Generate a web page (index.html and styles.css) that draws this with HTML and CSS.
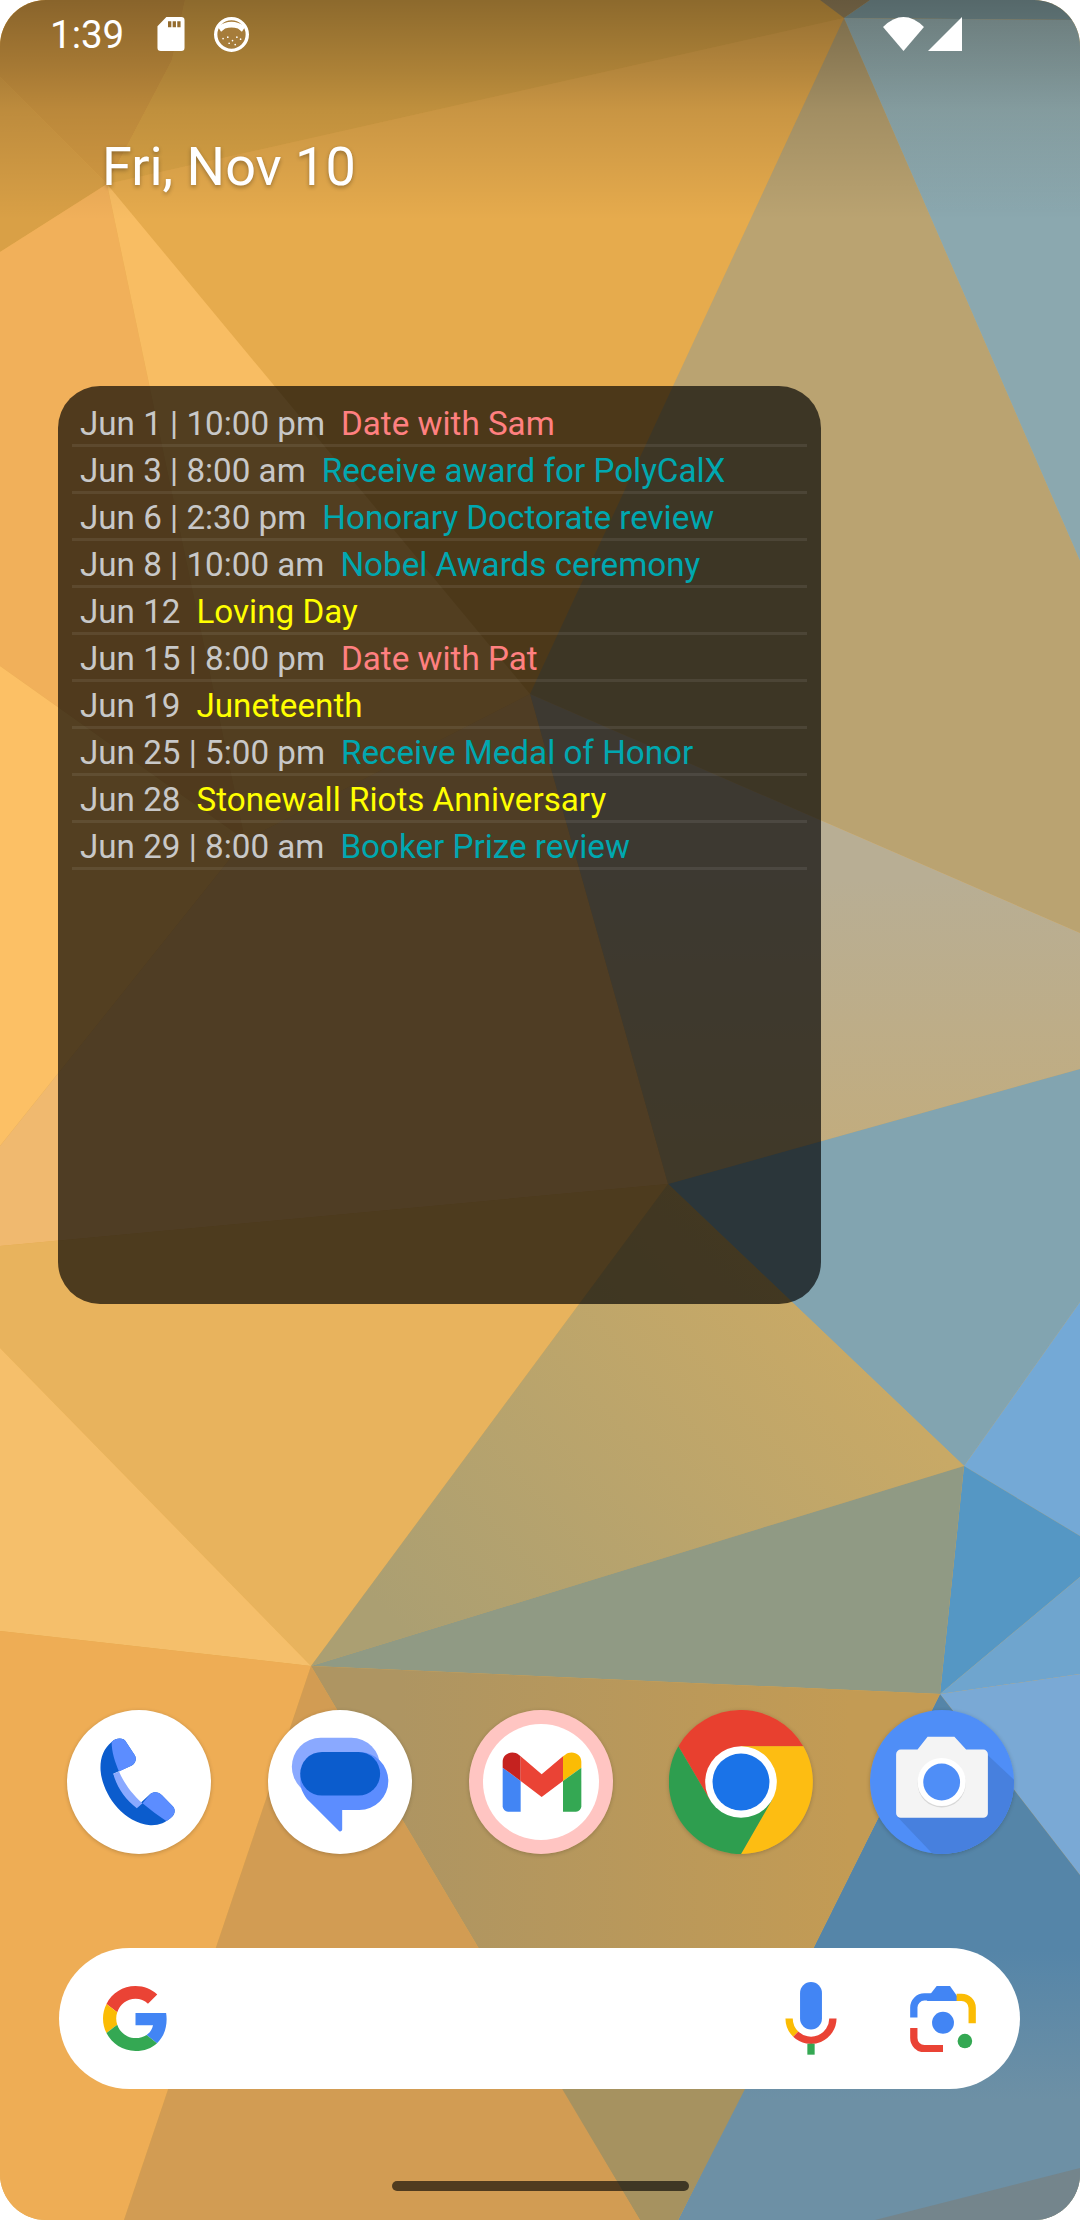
FILE: index.html
```html
<!DOCTYPE html>
<html lang="en">
<head>
    <meta charset="UTF-8">
    <meta name="viewport" content="width=device-width, initial-scale=1.0">
    <title>Home screen</title>
    <link rel="stylesheet" href="styles.css">
</head>
<body>
    <div class="screen">
        <!-- Wallpaper -->
        <svg class="wallpaper" viewBox="0 0 1080 2220">
            <defs>
                <linearGradient id="slate" gradientUnits="userSpaceOnUse" x1="0" y1="20" x2="0" y2="210">
                    <stop offset="0" stop-color="#a2bcbc"/>
                    <stop offset="1" stop-color="#8ba8af"/>
                </linearGradient>
                <linearGradient id="sand" gradientUnits="userSpaceOnUse" x1="0" y1="880" x2="0" y2="1180">
                    <stop offset="0" stop-color="#b8ae94"/>
                    <stop offset="1" stop-color="#c3ac7b"/>
                </linearGradient>
                <linearGradient id="olive" gradientUnits="userSpaceOnUse" x1="420" y1="1650" x2="800" y2="1300">
                    <stop offset="0" stop-color="#ab9f72"/>
                    <stop offset="1" stop-color="#c8a966"/>
                </linearGradient>
                <linearGradient id="umber" gradientUnits="userSpaceOnUse" x1="400" y1="0" x2="850" y2="0">
                    <stop offset="0" stop-color="#ae9562"/>
                    <stop offset="1" stop-color="#c39b54"/>
                </linearGradient>
                <linearGradient id="deep" gradientUnits="userSpaceOnUse" x1="0" y1="1950" x2="0" y2="2100">
                    <stop offset="0" stop-color="#5585a8"/>
                    <stop offset="1" stop-color="#6d90a5"/>
                </linearGradient>
            </defs>
            <rect width="1080" height="2220" fill="#e3a94c"/>
            <polygon points="0,77 107,184 172,60 185,0 0,0" fill="#d69c43"/>
            <polygon points="172,60 185,0 820,0 844,18 107,184" fill="#dca546"/>
            <polygon points="0,77 107,184 0,252" fill="#d9a046"/>
            <polygon points="820,0 870,0 844,18" fill="#a08a60"/>
            <polygon points="870,0 1080,0 1080,20 844,18" fill="#86a3a6"/>
            <polygon points="0,252 107,184 245,840 0,666" fill="#f1b05a"/>
            <polygon points="107,184 844,18 530,694" fill="#e6ab4d"/>
            <polygon points="107,184 530,694 245,840" fill="#f8bd63"/>
            <polygon points="0,666 245,840 0,1146" fill="#fcc065"/>
            <polygon points="0,1146 245,840 530,694 668,1184 0,1246" fill="#f0b96f"/>
            <polygon points="844,18 1080,561 1080,933 530,694" fill="#baa371"/>
            <polygon points="844,18 1080,20 1080,561" fill="url(#slate)"/>
            <polygon points="530,694 1080,933 1080,1069 668,1184" fill="url(#sand)"/>
            <polygon points="668,1184 1080,1069 1080,1302 964,1466" fill="#82a4b0"/>
            <polygon points="964,1466 1080,1302 1080,1536" fill="#74a9d6"/>
            <polygon points="964,1466 1080,1536 1080,1577 940,1694" fill="#5597c4"/>
            <polygon points="940,1694 1080,1577 1080,1674" fill="#6fa5ce"/>
            <polygon points="940,1694 1080,1674 1080,1875" fill="#7aa9d5"/>
            <polygon points="940,1694 1080,1875 1080,2220 678,2220" fill="url(#deep)"/>
            <polygon points="1080,2168 1080,2220 875,2220" fill="#74858c"/>
            <polygon points="0,1246 668,1184 311,1666 0,1348" fill="#e8b35d"/>
            <polygon points="668,1184 964,1466 311,1666" fill="url(#olive)"/>
            <polygon points="311,1666 964,1466 940,1694" fill="#909a84"/>
            <polygon points="0,1348 311,1666 0,1631" fill="#f5bf6b"/>
            <polygon points="0,1631 311,1666 124,2220 0,2220" fill="#eead55"/>
            <polygon points="311,1666 940,1694 678,2220 640,2220" fill="url(#umber)"/>
            <polygon points="561,2089 745,2089 678,2220 640,2220" fill="#a69260"/>
            <polygon points="311,1666 124,2220 640,2220" fill="#d29c53"/>
        </svg>
        <div class="scrim"></div>

        <!-- Status bar -->
        <div class="status-bar">
            <span class="clock">1:39</span>
            <svg class="sd-icon" viewBox="473 47 82 103">
                <path fill="#fff" fill-rule="evenodd" d="M500,47 H545 a10 10 0 0 1 10 10 V140 a10 10 0 0 1 -10 10 H483 a10 10 0 0 1 -10 -10 V75 Z M505,60 V78 H515 V60 Z M519,60 V78 H529 V60 Z M533,60 V78 H543 V60 Z"/>
            </svg>
            <svg class="cat-icon" viewBox="645 48 104 104">
                <circle cx="697" cy="100" r="47" fill="#a67c3a" stroke="#fff" stroke-width="10"/>
                <path fill="#fff" d="M656,76 Q697,48 738,76 L728,92 L716,82 Q697,76 678,82 L666,92 Z"/>
                <g fill="#fff">
                    <circle cx="672" cy="112" r="2.5"/><circle cx="686" cy="108" r="2.5"/>
                    <circle cx="700" cy="118" r="2.5"/><circle cx="713" cy="108" r="2.5"/>
                    <circle cx="724" cy="114" r="2.5"/><circle cx="690" cy="126" r="2.5"/>
                    <circle cx="708" cy="130" r="2.5"/>
                </g>
            </svg>
            <svg class="wifi-icon" viewBox="248 45 124 103">
                <path fill="#fff" d="M248,75 Q310,15 372,75 L310,148 Z"/>
            </svg>
            <svg class="signal-icon" viewBox="384 47 101 101">
                <polygon fill="#fff" points="485,47 485,148 384,148"/>
            </svg>
        </div>

        <div class="date">Fri, Nov 10</div>

        <!-- Calendar widget -->
        <div class="widget">
            <ul class="agenda">
                <li><span class="when">Jun 1 | 10:00 pm</span><span class="date-event">Date with Sam</span></li>
                <li><span class="when">Jun 3 | 8:00 am</span><span class="honor">Receive award for PolyCalX</span></li>
                <li><span class="when">Jun 6 | 2:30 pm</span><span class="honor">Honorary Doctorate review</span></li>
                <li><span class="when">Jun 8 | 10:00 am</span><span class="honor">Nobel Awards ceremony</span></li>
                <li><span class="when">Jun 12</span><span class="holiday">Loving Day</span></li>
                <li><span class="when">Jun 15 | 8:00 pm</span><span class="date-event">Date with Pat</span></li>
                <li><span class="when">Jun 19</span><span class="holiday">Juneteenth</span></li>
                <li><span class="when">Jun 25 | 5:00 pm</span><span class="honor">Receive Medal of Honor</span></li>
                <li><span class="when">Jun 28</span><span class="holiday">Stonewall Riots Anniversary</span></li>
                <li><span class="when">Jun 29 | 8:00 am</span><span class="honor">Booker Prize review</span></li>
            </ul>
        </div>

        <!-- Dock -->
        <div class="dock">
            <div class="app app-white">
                <svg viewBox="82 60 429 429">
                    <path fill="#0b5ccd" d="M215,155 C190,175 180,205 182,240 C186,300 240,395 330,403 C355,404 375,397 395,378 C405,368 405,355 397,347 L365,314 C355,303 340,303 330,310 L300,338 C270,315 240,285 220,250 L275,225 C287,218 290,205 284,195 L258,155 C250,142 230,142 215,155 Z"/>
                    <path fill="#5c8dff" d="M215,155 C225,143 250,140 258,155 L284,195 C290,205 287,218 275,225 L237,243 C225,215 215,185 215,155 Z"/>
                    <path fill="#8aa9ff" d="M220,250 L237,243 C250,275 275,310 307,338 L290,353 C255,325 230,290 220,250 Z"/>
                    <path fill="#5c8dff" d="M307,338 L330,310 C340,303 355,303 365,314 L397,347 C405,355 405,368 395,378 C390,383 385,387 378,391 C355,375 330,358 307,338 Z"/>
                </svg>
            </div>
            <div class="app app-white">
                <svg viewBox="684 60 429 429">
                    <rect x="755" y="143" width="263" height="172" rx="86" fill="#8aa9ff"/>
                    <path fill="#5c8dff" d="M866,185 H956 a86.5 86.5 0 0 1 0 173 H905 V415 a6 6 0 0 1 -11 4 L800,325 C785,305 780,290 780,271 A86 86 0 0 1 866,185 Z"/>
                    <rect x="780" y="185" width="238" height="130" rx="65" fill="#0b5ccd"/>
                </svg>
            </div>
            <div class="app app-gmail">
                <svg viewBox="55 57 432 432">
                    <circle cx="271" cy="273" r="216" fill="#ffc5c2"/>
                    <circle cx="271" cy="273" r="174" fill="#fff"/>
                    <path fill="#4285f4" d="M156,230 L210,270 V362 H172 a16 16 0 0 1 -16 -16 Z"/>
                    <path fill="#c5221f" d="M156,230 V212 C156,188 186,176 205,192 L210,196 V270 Z"/>
                    <polygon fill="#ea4335" points="210,196 273,250 337,196 337,270 273,318 210,270"/>
                    <path fill="#fbbc04" d="M392,230 V212 C392,188 362,176 343,192 L337,196 V270 Z"/>
                    <path fill="#34a853" d="M392,230 L337,270 V362 H376 a16 16 0 0 0 16 -16 Z"/>
                </svg>
            </div>
            <div class="app">
                <svg viewBox="60 60 430 430">
                    <path fill="#e8402f" d="M88,168 A215 215 0 0 1 461,168 L275,168 L182,328 Z"/>
                    <path fill="#fdbd12" d="M461,168 A215 215 0 0 1 275,490 L368,328 L275,168 Z"/>
                    <path fill="#2e9e4f" d="M275,490 A215 215 0 0 1 88,168 L182,328 L368,328 Z"/>
                    <circle cx="275" cy="275" r="107" fill="#fff"/>
                    <circle cx="275" cy="275" r="85" fill="#1a73e8"/>
                </svg>
            </div>
            <div class="app">
                <svg viewBox="663 60 430 430">
                    <clipPath id="cameraClip"><circle cx="878" cy="275" r="215"/></clipPath>
                    <circle cx="878" cy="275" r="215" fill="#4f8ef7"/>
                    <polygon clip-path="url(#cameraClip)" fill="#4780de" points="1015,195 1100,275 1100,500 860,500 741,375"/>
                    <path fill="#f4f4f4" d="M755,178 H805 L835,140 H915 L950,178 H1001 a14 14 0 0 1 14 14 V368 a14 14 0 0 1 -14 14 H755 a14 14 0 0 1 -14 -14 V192 a14 14 0 0 1 14 -14 Z"/>
                    <circle cx="877" cy="279" r="72" fill="#d8d8d8"/>
                    <circle cx="877" cy="275" r="72" fill="#fff"/>
                    <circle cx="877" cy="275" r="55" fill="#4f8ef7"/>
                </svg>
            </div>
        </div>

        <!-- Search bar -->
        <div class="search">
            <svg class="g-logo" viewBox="0 0 48 48">
                <path fill="#ea4335" d="M24 9.5c3.54 0 6.71 1.22 9.21 3.6l6.85-6.85C35.9 2.38 30.47 0 24 0 14.62 0 6.51 5.38 2.56 13.22l7.98 6.19C12.43 13.72 17.74 9.5 24 9.5z"/>
                <path fill="#4285f4" d="M46.98 24.55c0-1.57-.15-3.09-.38-4.55H24v9.02h12.94c-.58 2.96-2.26 5.48-4.78 7.18l7.73 6c4.51-4.18 7.09-10.36 7.09-17.65z"/>
                <path fill="#fbbc05" d="M10.53 28.59c-.5-1.45-.78-2.99-.78-4.59s.27-3.14.78-4.59l-7.98-6.19C.92 16.46 0 20.12 0 24c0 3.88.92 7.54 2.56 10.78l7.97-6.19z"/>
                <path fill="#34a853" d="M24 48c6.48 0 11.93-2.13 15.89-5.81l-7.73-6c-2.15 1.45-4.92 2.3-8.16 2.3-6.26 0-11.57-4.22-13.47-9.91l-7.98 6.19C6.51 42.62 14.62 48 24 48z"/>
            </svg>
            <svg class="mic" viewBox="105 97 156 220">
                <rect x="150" y="97" width="66" height="143" rx="33" fill="#4285f4"/>
                <path fill="none" stroke="#fbbc04" stroke-width="22" d="M117,207 A66 66 0 0 0 137,254"/>
                <path fill="none" stroke="#ea4335" stroke-width="22" d="M137,254 A66 66 0 0 0 249,207"/>
                <rect x="172" y="283" width="22" height="33" fill="#34a853"/>
            </svg>
            <svg class="lens" viewBox="480 105 198 199">
                <path fill="none" stroke="#4285f4" stroke-width="22" d="M491,200 V170 a32 32 0 0 1 32 -32 H560"/>
                <polygon fill="#4285f4" points="543,127 560,105 600,105 632,150 530,150"/>
                <path fill="none" stroke="#fbbc04" stroke-width="22" d="M620,139 H635 a32 32 0 0 1 32 32 V217"/>
                <path fill="none" stroke="#ea4335" stroke-width="22" d="M491,232 V262 a32 32 0 0 0 32 32 H579"/>
                <circle cx="579" cy="216" r="33" fill="#4285f4"/>
                <circle cx="645" cy="271" r="22" fill="#34a853"/>
            </svg>
        </div>

        <div class="handle"></div>
    </div>
</body>
</html>
```

FILE: styles.css
```css
body {
    margin: 0;
    background-color: #fff;
    font-family: Roboto, sans-serif;
}

.screen {
    position: relative;
    width: 1080px;
    height: 2220px;
    overflow: hidden;
    border-radius: 46px;
    display: flex;
    flex-direction: column;
}

.wallpaper {
    position: absolute;
    top: 0;
    left: 0;
    width: 1080px;
    height: 2220px;
}

.scrim {
    position: absolute;
    top: 0;
    left: 0;
    width: 100%;
    height: 220px;
    background: linear-gradient(to bottom, rgba(0, 0, 0, 0.36) 0, rgba(0, 0, 0, 0.22) 70px, rgba(0, 0, 0, 0.13) 110px, rgba(0, 0, 0, 0) 220px);
}

.status-bar,
.date,
.widget,
.dock,
.search,
.handle {
    position: relative;
}

.status-bar {
    height: 68px;
    display: flex;
    align-items: center;
    padding: 0 118px 0 50px;
    color: #fff;
}

.clock {
    font-size: 38.5px;
    width: 107px;
}

.sd-icon {
    width: 28px;
    height: 34px;
    margin-right: 29px;
}

.cat-icon {
    width: 35px;
    height: 35px;
}

.wifi-icon {
    width: 41px;
    height: 34px;
    margin-left: auto;
    margin-right: 4px;
}

.signal-icon {
    width: 34px;
    height: 34px;
}

.date {
    margin: 63px 0 0 102px;
    font-size: 54px;
    line-height: 72px;
    color: #fff;
    text-shadow: 0 2px 4px rgba(0, 0, 0, 0.3);
}

.widget {
    width: 763px;
    height: 918px;
    margin: 183px 0 0 58px;
    box-sizing: border-box;
    padding: 14px 14px 0;
    background-color: rgba(0, 0, 0, 0.67);
    border-radius: 42px;
}

.agenda {
    list-style: none;
    margin: 0;
    padding: 0;
}

.agenda li {
    display: flex;
    gap: 16px;
    height: 44px;
    padding-left: 8px;
    font-size: 33.2px;
    line-height: 47px;
    white-space: nowrap;
    border-bottom: 3px solid rgba(255, 255, 255, 0.08);
}

.when {
    color: #c8c8c8;
}

.date-event {
    color: #ff8080;
}

.honor {
    color: #00a8b0;
}

.holiday {
    color: #ffff00;
}

.dock {
    display: flex;
    justify-content: space-between;
    margin: 406px 66px 0 67px;
}

.app {
    width: 144px;
    height: 144px;
    border-radius: 50%;
    box-shadow: 0 1px 4px rgba(0, 0, 0, 0.2);
}

.app svg {
    display: block;
    width: 144px;
    height: 144px;
}

.app-white {
    background-color: #fff;
}

.search {
    display: flex;
    align-items: center;
    height: 141px;
    margin: 94px 60px 0 59px;
    background-color: #fff;
    border-radius: 71px;
}

.g-logo {
    width: 65px;
    height: 65px;
    margin-left: 44px;
}

.mic {
    width: 52px;
    height: 73px;
    margin-left: auto;
}

.lens {
    width: 66px;
    height: 66px;
    margin: 0 44px 0 73px;
}

.handle {
    width: 297px;
    height: 10px;
    margin: 92px auto 0;
    background-color: rgba(0, 0, 0, 0.62);
    border-radius: 5px;
}
```
